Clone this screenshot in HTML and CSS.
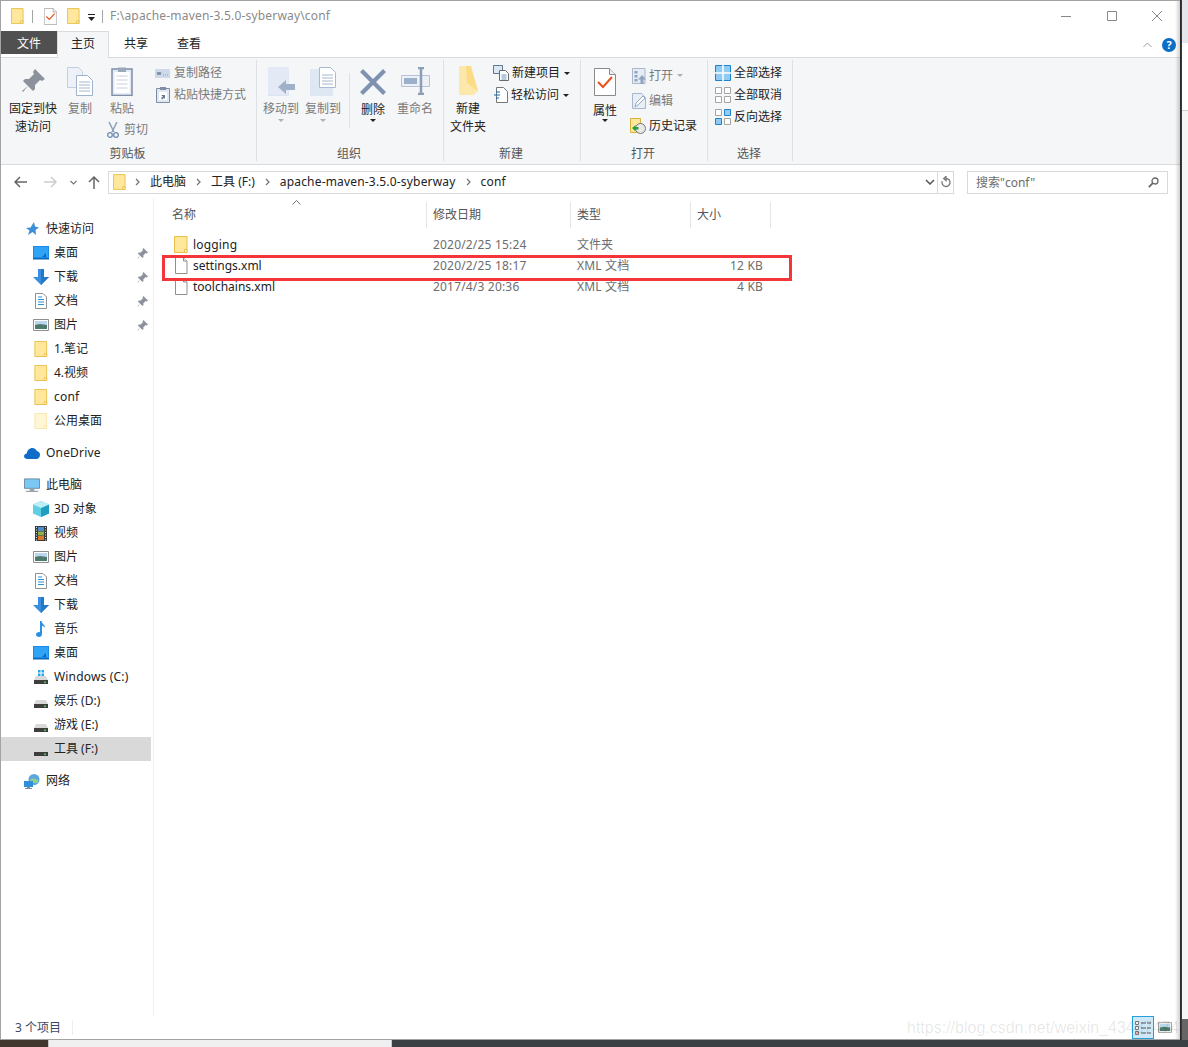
FILE: index.html
```html
<!DOCTYPE html>
<html lang="zh-CN">
<head>
    <meta charset="UTF-8">
    <title>conf</title>
    <link rel="stylesheet" href="styles.css">
</head>
<body>
    <svg class="defs" width="0" height="0">
        <symbol id="folder" viewBox="0 0 14 17">
            <path d="M.5.5h12.5v16H.5z" fill="#ffe89c" stroke="#e8c04a"/>
            <path d="M10.5 13.5H13v3h-2.500z" fill="#fff3c8" stroke="#e8c04a"/>
        </symbol>
        <symbol id="folder-pale" viewBox="0 0 14 17">
            <path d="M.5.5h12.5v16H.5z" fill="#fff6d6" stroke="#f6e6ae"/>
            <path d="M10.5 13.5H13v3h-2.500z" fill="#fffaf0" stroke="#f6e6ae"/>
        </symbol>
        <symbol id="file" viewBox="0 0 14 17">
            <path d="M1.500.5h8l3.500 3.500v12.500h-11.500z" fill="#fff" stroke="#8f8f8f"/>
            <path d="M9.500.5v3.500h3.500" fill="#eee" stroke="#8f8f8f"/>
        </symbol>
        <symbol id="prop" viewBox="0 0 22 28">
            <path d="M.5.5h15l6 6v21H.5z" fill="#fff" stroke="#8a8a8a"/>
            <path d="M15.500.5v6h6" fill="#eee" stroke="#8a8a8a"/>
            <path d="M4 14l5 5 9-10" fill="none" stroke="#e8531e" stroke-width="2"/>
        </symbol>
        <symbol id="pin" viewBox="0 0 12 12">
            <path d="M7 0l5 5-1.500 1-1-.5L7 8v2L6 11 3.500 8.500 1 11.500.5 11l3-2.500L1 6l1-1h2l2.500-2.500-.5-1z" fill="#8b929c"/>
        </symbol>
        <symbol id="desktop" viewBox="0 0 16 14">
            <path d="M0 0h16v12.500H0z" fill="#1a8ae6"/>
            <path d="M1 1h14v10H1z" fill="#2fa3f5"/>
            <path d="M0 12h16v1.500H0zM9 11l4-4v4z" fill="#0b68b8"/>
        </symbol>
        <symbol id="download" viewBox="0 0 16 16">
            <path d="M5 0h6v8h5l-8 8-8-8h5z" fill="#3a8ee0"/>
            <path d="M8 0h3v8h5l-8 8z" fill="#2678c8"/>
        </symbol>
        <symbol id="doc" viewBox="0 0 12 16">
            <path d="M.5.500h7.500l3.500 3.500v11.500H.5z" fill="#fff" stroke="#8f8f8f"/>
            <path d="M3 4h4M3 6.500h6M3 9h6M3 11.500h6" stroke="#2d8fd8" fill="none"/>
        </symbol>
        <symbol id="picture" viewBox="0 0 16 12">
            <path d="M.5.500h15v11H.5z" fill="#fff" stroke="#8f8f8f"/>
            <path d="M2 2h12v4H2z" fill="#b8d6ee"/>
            <path d="M2 6l5-1 7 1v4H2z" fill="#4d7a6c"/>
        </symbol>
        <symbol id="star" viewBox="0 0 14 14">
            <path d="M9 0l1 4.500 4 1-3.500 2.500.5 5-3.500-3L3 13l1.500-4.500L1 6l4.500-.500z" fill="#3d8ed8"/>
        </symbol>
        <symbol id="cloud" viewBox="0 0 16 11">
            <path d="M3.500 11C1.500 11 0 9.800 0 8.200 0 6.700 1.200 5.500 2.800 5.400 3.200 2.400 5.500 0 8.300 0c2 0 3.700 1.100 4.500 3 1.800.2 3.200 1.700 3.200 3.800 0 2.400-1.600 4.200-3.600 4.200z" fill="#0f6cc8"/>
        </symbol>
        <symbol id="pc" viewBox="0 0 17 15">
            <path d="M.5.500h16v10H.5z" fill="#7cc8f4" stroke="#6c8ba0"/>
            <path d="M6 11h5v2H6zM2 13h13v1.500H2z" fill="#9aa4ac"/>
        </symbol>
        <symbol id="cube" viewBox="0 0 16 16">
            <path d="M8 0l8 3.500v9L8 16l-8-3.500v-9z" fill="#5fd0e4"/>
            <path d="M8 7l8-3.500v9L8 16z" fill="#1f9ec0"/>
            <path d="M8 0l8 3.500L8 7 0 3.500z" fill="#bdeef6"/>
        </symbol>
        <symbol id="film" viewBox="0 0 12 15">
            <path d="M0 0h12v15H0z" fill="#3a3a3a"/>
            <path d="M3 1h6v4H3z" fill="#4d8ec8"/>
            <path d="M3 5.500h6v4H3z" fill="#8fb04a"/>
            <path d="M3 10h6v4H3z" fill="#d8782e"/>
            <path d="M1 1.500h1M1 4h1M1 6.500h1M1 9h1M1 11.500h1M1 14h1M10 1.500h1M10 4h1M10 6.500h1M10 9h1M10 11.500h1M10 14h1" stroke="#ddd" fill="none"/>
        </symbol>
        <symbol id="music" viewBox="0 0 10 16">
            <path d="M4 0h1.500c.3 2.500 3.500 3.500 3.500 7-.8-1.500-2-2-3-2.300V13c0 1.700-1.300 3-3 3S0 15 0 13.500 1.500 11 3 11c.4 0 .7 0 1 .2z" fill="#2c8fe6"/>
        </symbol>
        <symbol id="drive" viewBox="0 0 14 8">
            <path d="M2 0h10l2 4H0z" fill="#d9d9d9"/>
            <path d="M0 4h14v4H0z" fill="#3e3e3e"/>
            <path d="M10 5.500h2V7h-2z" fill="#3fd04a"/>
        </symbol>
        <symbol id="winlogo" viewBox="0 0 6 6">
            <path d="M0 0h2.500v2.500H0zM3.500 0H6v2.500H3.500zM0 3.500h2.500V6H0zM3.500 3.500H6V6H3.500z" fill="#22a7e8"/>
        </symbol>
        <symbol id="network" viewBox="0 0 16 15">
            <circle cx="10" cy="5.500" r="5.500" fill="#5aa6de"/>
            <path d="M6 6c2-2 5-2 8 0v3H7z" fill="#8fd08a"/>
            <path d="M0 7h9v6H0z" fill="#2f8fd8"/>
            <path d="M3 13h3v1h2v1H1v-1h2z" fill="#7d8e9c"/>
        </symbol>
        <symbol id="page-copy" viewBox="0 0 26 29">
            <path d="M.5.500h11l4 4v16H.5z" fill="#eef2f8" stroke="#c2cfe2"/>
            <path d="M9.500 8.500h11l5 5v15h-16z" fill="#fff" stroke="#9fb2cd"/>
            <path d="M12 15h11M12 18h11M12 21h11M12 24h11" stroke="#a6b6cc" fill="none"/>
        </symbol>
        <symbol id="clipboard" viewBox="0 0 22 30">
            <path d="M1 3h20v26.500H1z" fill="#e3eaf4" stroke="#7f8ea6" stroke-width="1.500"/>
            <path d="M3.500 6h15v21h-15z" fill="#fff"/>
            <path d="M7 1.500h8V6H7z" fill="#9aa8bc"/>
            <path d="M5.500 10h11M5.500 14h11M5.500 18h11M5.500 22h11" stroke="#c6d0de" fill="none"/>
        </symbol>
        <symbol id="scissors" viewBox="0 0 12 16">
            <path d="M2 0l5 10M10 0L5 10" stroke="#8c9fba" stroke-width="1.500" fill="none"/>
            <circle cx="3" cy="13" r="2.300" fill="none" stroke="#6f8cb2" stroke-width="1.300"/>
            <circle cx="9" cy="13" r="2.300" fill="none" stroke="#6f8cb2" stroke-width="1.300"/>
        </symbol>
        <symbol id="copy-path" viewBox="0 0 15 9">
            <path d="M0 0h15v9H0z" fill="#ced9e9"/>
            <path d="M2 3l1 3 1-3 1 3 1-3M8 6h.7M10 6h.7M12 6h.7" stroke="#66778f" fill="none" stroke-width=".8"/>
        </symbol>
        <symbol id="paste-short" viewBox="0 0 14 16">
            <path d="M.5 1.500h13v14H.5z" fill="#dfe7f1" stroke="#7f8ea6"/>
            <path d="M4 0h6v3H4z" fill="#7f8ea6"/>
            <path d="M3 5h8v8H3z" fill="#fff"/>
            <path d="M5 8h4v4L8 11l-2 1.500L5 11l2-1.500z" fill="#66778f"/>
        </symbol>
        <symbol id="move-to" viewBox="0 0 27 29">
            <path d="M0 0h21v29H0z" fill="#dbe4f1"/>
            <path d="M0 0h21L20 28H0z" fill="#e3eaf5"/>
            <path d="M10 20l8-7v4h9v6h-9v4z" fill="#9fb0c9"/>
        </symbol>
        <symbol id="copy-to" viewBox="0 0 26 29">
            <path d="M0 2h23v27H0z" fill="#dfe7f3"/>
            <path d="M9.500.5h11l5 5v15h-16z" fill="#fff" stroke="#a9bad1"/>
            <path d="M12 8h11M12 11h11M12 14h11M12 17h11" stroke="#a6b6cc" fill="none"/>
        </symbol>
        <symbol id="delete" viewBox="0 0 26 26">
            <path d="M3 0l10 10L23 0l3 3-10 10 10 10-3 3-10-10L3 26l-3-3 10-10L0 3z" fill="#7f92b0"/>
        </symbol>
        <symbol id="rename" viewBox="0 0 29 28">
            <path d="M.5 8.500h28v11H.5z" fill="#edf1f7" stroke="#b7c3d5"/>
            <path d="M3 11h13v6H3z" fill="#9db0ca"/>
            <path d="M17 1h6M20 1v26M17 27h6" stroke="#8c9db6" stroke-width="2.500" fill="none"/>
        </symbol>
        <symbol id="new-folder" viewBox="0 0 20 30">
            <path d="M1 0h12l7 25-5 4H1z" fill="#fbdc85"/>
            <path d="M1 0h7l1 17 11 8-5 4H1z" fill="#fde8ac"/>
        </symbol>
        <symbol id="new-item" viewBox="0 0 16 16">
            <path d="M.5.500h9v8h-9z" fill="#dbe8f5" stroke="#5c7891"/>
            <path d="M6.500 5.500h6l3 3v7h-9z" fill="#fff" stroke="#6d6d6d"/>
            <path d="M8.500 10h5M8.500 12h5M8.500 14h5" stroke="#6c96c0" fill="none"/>
        </symbol>
        <symbol id="easy-access" viewBox="0 0 15 16">
            <path d="M3.500.500h7l4 4v11h-11z" fill="#fff" stroke="#777"/>
            <path d="M3 5h4M1 8h6M3 11h3" stroke="#0e6bb8" stroke-width="1.200" fill="none"/>
        </symbol>
        <symbol id="open-file" viewBox="0 0 14 16">
            <path d="M.5.500h12.500v15H.5z" fill="#e6ecf5" stroke="#a8b7cc"/>
            <path d="M2.500 3h3v2.500h-3zM2.500 7h3v2.500h-3zM2.500 11h3v2.500h-3z" fill="#8fa3bf"/>
            <path d="M10 7l4 4.500h-2.500V16h-3v-4.500H6z" fill="#8fa3bf"/>
        </symbol>
        <symbol id="edit" viewBox="0 0 14 16">
            <path d="M.5.500h9l4 4v11H.5z" fill="#e8eef6" stroke="#a8b7cc"/>
            <path d="M3 14l1-4 7-7 2 2-7 7z" fill="#fff" stroke="#94a8c4"/>
        </symbol>
        <symbol id="history" viewBox="0 0 16 16">
            <path d="M.5.500h10v14H.5z" fill="#ffe89c" stroke="#d8b23c"/>
            <circle cx="10.500" cy="10.500" r="5" fill="#e8e8e8" stroke="#777"/>
            <path d="M2 10l3.500-3v2h3v2.500h-3v2z" fill="#2e9e3a"/>
        </symbol>
        <symbol id="select-all" viewBox="0 0 16 16">
            <path d="M.5.500h15v15H.5z" fill="#8fcbf3" stroke="#1f83cc"/>
            <path d="M8 0v16M0 8h16" stroke="#fff" stroke-width="1.500"/>
        </symbol>
        <symbol id="select-none" viewBox="0 0 16 16">
            <path d="M.5.500h6v6h-6zM9.500.500h6v6h-6zM.5 9.500h6v6h-6zM9.500 9.500h6v6h-6z" fill="#fff" stroke="#a5a5a5"/>
        </symbol>
        <symbol id="select-invert" viewBox="0 0 16 16">
            <path d="M.5.500h6v6h-6zM9.500 9.500h6v6h-6z" fill="#fff" stroke="#a5a5a5"/>
            <path d="M9.500.500h6v6h-6zM.5 9.500h6v6h-6z" fill="#8fcbf3" stroke="#1f83cc"/>
        </symbol>
        <symbol id="chev" viewBox="0 0 5 8">
            <path d="M1 1l3 3-3 3" fill="none" stroke="#777" stroke-width="1.300"/>
        </symbol>
    </svg>

    <div class="window">
        <div class="titlebar">
            <svg class="ico-folder" width="13" height="16"><use href="#folder"/></svg>
            <span class="title-sep"></span>
            <svg class="ico-qat-doc" width="13" height="17"><use href="#prop"/></svg>
            <svg class="ico-qat-folder" width="13" height="16"><use href="#folder"/></svg>
            <svg class="ico-qat-more" width="7" height="7" viewBox="0 0 7 7"><path d="M0 0h7v1H0zM0 3h7L3.500 7z" fill="#222"/></svg>
            <span class="title-sep title-sep-2"></span>
            <span class="title-path wide">F:\apache-maven-3.5.0-syberway\conf</span>
            <div class="winbtns">
                <svg width="10" height="10" viewBox="0 0 10 10"><path d="M0 5.500h10" stroke="#888"/></svg>
                <svg width="10" height="10" viewBox="0 0 10 10"><path d="M.5.500h9v9h-9z" fill="none" stroke="#888"/></svg>
                <svg width="10" height="10" viewBox="0 0 10 10"><path d="M0 0l10 10M10 0L0 10" stroke="#888"/></svg>
            </div>
        </div>

        <div class="tabs">
            <span class="tab tab-file">文件</span>
            <span class="tab tab-home">主页</span>
            <span class="tab tab-share">共享</span>
            <span class="tab tab-view">查看</span>
            <div class="tabs-right">
                <svg width="9" height="6" viewBox="0 0 9 6"><path d="M.5 5l4-4 4 4" fill="none" stroke="#999"/></svg>
                <span class="help">?</span>
            </div>
        </div>

        <div class="ribbon">
            <div class="group group-clip">
                <div class="group-body">
                    <div class="big big-pin">
                        <div class="big-icon"><svg width="24" height="24"><use href="#pin"/></svg></div>
                        <span>固定到快<br>速访问</span>
                    </div>
                    <div class="big big-copy off">
                        <div class="big-icon"><svg width="26" height="29"><use href="#page-copy"/></svg></div>
                        <span>复制</span>
                    </div>
                    <div class="paste-col">
                        <div class="big off">
                            <div class="big-icon"><svg width="22" height="30"><use href="#clipboard"/></svg></div>
                            <span>粘贴</span>
                        </div>
                        <div class="cut-row off">
                            <svg width="12" height="16"><use href="#scissors"/></svg>
                            <span>剪切</span>
                        </div>
                    </div>
                    <div class="small-list off">
                        <div class="small"><svg width="15" height="9"><use href="#copy-path"/></svg><span>复制路径</span></div>
                        <div class="small"><svg class="ico-paste" width="14" height="16"><use href="#paste-short"/></svg><span>粘贴快捷方式</span></div>
                    </div>
                </div>
                <div class="group-label">剪贴板</div>
            </div>

            <div class="group group-org">
                <div class="group-body">
                    <div class="big big-38 off">
                        <div class="big-icon"><svg width="27" height="29"><use href="#move-to"/></svg></div>
                        <span>移动到</span>
                        <i class="caret caret-off"></i>
                    </div>
                    <div class="big big-38 off">
                        <div class="big-icon"><svg width="26" height="29"><use href="#copy-to"/></svg></div>
                        <span>复制到</span>
                        <i class="caret caret-off"></i>
                    </div>
                    <span class="group-sep"></span>
                    <div class="big big-38 big-del">
                        <div class="big-icon"><svg width="26" height="26"><use href="#delete"/></svg></div>
                        <span>删除</span>
                        <i class="caret"></i>
                    </div>
                    <div class="big big-38 off">
                        <div class="big-icon"><svg width="29" height="28"><use href="#rename"/></svg></div>
                        <span>重命名</span>
                    </div>
                </div>
                <div class="group-label">组织</div>
            </div>

            <div class="group group-new">
                <div class="group-body">
                    <div class="big big-newfolder">
                        <div class="big-icon"><svg width="20" height="30"><use href="#new-folder"/></svg></div>
                        <span>新建<br>文件夹</span>
                    </div>
                    <div class="small-list">
                        <div class="small"><svg width="16" height="16"><use href="#new-item"/></svg><span>新建项目</span><i class="caret caret-side"></i></div>
                        <div class="small"><svg width="15" height="16"><use href="#easy-access"/></svg><span>轻松访问</span><i class="caret caret-side"></i></div>
                    </div>
                </div>
                <div class="group-label">新建</div>
            </div>

            <div class="group group-open">
                <div class="group-body">
                    <div class="big big-prop">
                        <div class="big-icon"><svg width="22" height="28"><use href="#prop"/></svg></div>
                        <span>属性</span>
                        <i class="caret"></i>
                    </div>
                    <div class="small-list small-list-open">
                        <div class="small off"><svg width="14" height="16"><use href="#open-file"/></svg><span>打开</span><i class="caret caret-side caret-off"></i></div>
                        <div class="small off"><svg width="14" height="16"><use href="#edit"/></svg><span>编辑</span></div>
                        <div class="small"><svg class="ico-history" width="16" height="16"><use href="#history"/></svg><span>历史记录</span></div>
                    </div>
                </div>
                <div class="group-label">打开</div>
            </div>

            <div class="group group-select">
                <div class="group-body">
                    <div class="small-list">
                        <div class="small"><svg width="16" height="16"><use href="#select-all"/></svg><span>全部选择</span></div>
                        <div class="small"><svg width="16" height="16"><use href="#select-none"/></svg><span>全部取消</span></div>
                        <div class="small"><svg width="16" height="16"><use href="#select-invert"/></svg><span>反向选择</span></div>
                    </div>
                </div>
                <div class="group-label">选择</div>
            </div>
        </div>

        <div class="addressbar">
            <svg class="nav-back" width="13" height="12" viewBox="0 0 13 12"><path d="M6 1L1 6l5 5M1 6h12" fill="none" stroke="#666" stroke-width="1.500"/></svg>
            <svg class="nav-forward" width="13" height="12" viewBox="0 0 13 12"><path d="M7 1l5 5-5 5M12 6H0" fill="none" stroke="#ccc" stroke-width="1.500"/></svg>
            <svg class="nav-recent" width="7" height="5" viewBox="0 0 7 5"><path d="M.5 1l3 3 3-3" fill="none" stroke="#777" stroke-width="1.200"/></svg>
            <svg class="nav-up" width="12" height="13" viewBox="0 0 12 13"><path d="M1 6l5-5 5 5M6 1v12" fill="none" stroke="#666" stroke-width="1.500"/></svg>
            <div class="crumbs">
                <svg class="crumb-folder" width="13" height="16"><use href="#folder"/></svg>
                <svg class="crumb-chev" width="5" height="8"><use href="#chev"/></svg>
                <span>此电脑</span>
                <svg class="crumb-chev" width="5" height="8"><use href="#chev"/></svg>
                <span>工具 (F:)</span>
                <svg class="crumb-chev" width="5" height="8"><use href="#chev"/></svg>
                <span class="wide">apache-maven-3.5.0-syberway</span>
                <svg class="crumb-chev" width="5" height="8"><use href="#chev"/></svg>
                <span class="wide">conf</span>
                <svg class="crumb-down" width="10" height="6" viewBox="0 0 10 6"><path d="M1 1l4 4 4-4" fill="none" stroke="#555" stroke-width="1.500"/></svg>
                <div class="crumb-refresh">
                    <svg width="10" height="12" viewBox="0 0 10 12"><path d="M5 2.500a4 4 0 1 1-3.800 2.800M5 .5v4L2.700 2.500z" fill="none" stroke="#777" stroke-width="1.300"/></svg>
                </div>
            </div>
            <div class="search">
                <span>搜索"conf"</span>
                <svg width="11" height="11" viewBox="0 0 11 11"><circle cx="7" cy="4" r="3" fill="none" stroke="#666" stroke-width="1.300"/><path d="M4.800 6.200L.8 10.200" stroke="#666" stroke-width="1.800"/></svg>
            </div>
        </div>

        <div class="main">
            <div class="tree">
                <div class="tree-group">
                    <div class="node node-top"><svg width="14" height="14"><use href="#star"/></svg><span>快速访问</span></div>
                    <div class="node"><svg width="16" height="14"><use href="#desktop"/></svg><span>桌面</span><svg class="pin" width="11" height="11"><use href="#pin"/></svg></div>
                    <div class="node"><svg width="16" height="16"><use href="#download"/></svg><span>下载</span><svg class="pin" width="11" height="11"><use href="#pin"/></svg></div>
                    <div class="node"><svg width="16" height="16"><use href="#doc"/></svg><span>文档</span><svg class="pin" width="11" height="11"><use href="#pin"/></svg></div>
                    <div class="node"><svg width="16" height="12"><use href="#picture"/></svg><span>图片</span><svg class="pin" width="11" height="11"><use href="#pin"/></svg></div>
                    <div class="node"><svg width="16" height="16"><use href="#folder"/></svg><span>1.笔记</span></div>
                    <div class="node"><svg width="16" height="16"><use href="#folder"/></svg><span>4.视频</span></div>
                    <div class="node"><svg width="16" height="16"><use href="#folder"/></svg><span class="wide">conf</span></div>
                    <div class="node"><svg width="16" height="16"><use href="#folder-pale"/></svg><span>公用桌面</span></div>
                </div>
                <div class="tree-group">
                    <div class="node node-top"><svg width="16" height="11"><use href="#cloud"/></svg><span class="wide">OneDrive</span></div>
                </div>
                <div class="tree-group">
                    <div class="node node-top"><svg width="17" height="15"><use href="#pc"/></svg><span>此电脑</span></div>
                    <div class="node"><svg width="16" height="16"><use href="#cube"/></svg><span>3D 对象</span></div>
                    <div class="node"><svg width="16" height="15"><use href="#film"/></svg><span>视频</span></div>
                    <div class="node"><svg width="16" height="12"><use href="#picture"/></svg><span>图片</span></div>
                    <div class="node"><svg width="16" height="16"><use href="#doc"/></svg><span>文档</span></div>
                    <div class="node"><svg width="16" height="16"><use href="#download"/></svg><span>下载</span></div>
                    <div class="node"><svg width="16" height="16"><use href="#music"/></svg><span>音乐</span></div>
                    <div class="node"><svg width="16" height="14"><use href="#desktop"/></svg><span>桌面</span></div>
                    <div class="node"><svg class="win-badge" width="6" height="6"><use href="#winlogo"/></svg><svg class="drive" width="16" height="8"><use href="#drive"/></svg><span class="wide">Windows (C:)</span></div>
                    <div class="node"><svg class="drive" width="16" height="8"><use href="#drive"/></svg><span>娱乐 (D:)</span></div>
                    <div class="node"><svg class="drive" width="16" height="8"><use href="#drive"/></svg><span>游戏 (E:)</span></div>
                    <div class="node node-active"><svg class="drive" width="16" height="8"><use href="#drive"/></svg><span>工具 (F:)</span></div>
                </div>
                <div class="tree-group">
                    <div class="node node-top"><svg width="16" height="15"><use href="#network"/></svg><span>网络</span></div>
                </div>
            </div>

            <div class="files">
                <svg class="sort-arrow" width="9" height="5" viewBox="0 0 9 5"><path d="M.5 4.500l4-4 4 4" fill="none" stroke="#777"/></svg>
                <div class="file-head">
                    <span class="col-name">名称</span>
                    <span class="col-date">修改日期</span>
                    <span class="col-type">类型</span>
                    <span class="col-size">大小</span>
                </div>
                <div class="file-row">
                    <span class="col-name wide"><svg width="14" height="17"><use href="#folder"/></svg>logging</span>
                    <span class="col-date wide">2020/2/25 15:24</span>
                    <span class="col-type">文件夹</span>
                    <span class="col-size"></span>
                </div>
                <div class="file-row">
                    <span class="col-name"><svg width="14" height="17"><use href="#file"/></svg>settings.xml</span>
                    <span class="col-date wide">2020/2/25 18:17</span>
                    <span class="col-type wide">XML 文档</span>
                    <span class="col-size wide">12 KB</span>
                </div>
                <div class="file-row">
                    <span class="col-name"><svg width="14" height="17"><use href="#file"/></svg>toolchains.xml</span>
                    <span class="col-date wide">2017/4/3 20:36</span>
                    <span class="col-type wide">XML 文档</span>
                    <span class="col-size wide">4 KB</span>
                </div>
                <div class="highlight"></div>
            </div>
        </div>

        <div class="statusbar">
            <span class="status-count">3 个项目</span>
            <span class="status-sep"></span>
            <div class="views">
                <span class="view view-on">
                    <svg width="16" height="14" viewBox="0 0 16 14"><path d="M.5.500h3v3h-3zM.5 5.500h3v3h-3z" fill="#fff" stroke="#777"/><path d="M.5 10.500h3v3h-3z" fill="#f4b0a8" stroke="#777"/><path d="M6 2h10M6 7h10M6 12h10" stroke="#555" stroke-dasharray="5 1" fill="none"/></svg>
                </span>
                <span class="view view-off">
                    <svg width="14" height="11"><use href="#picture"/></svg>
                </span>
            </div>
        </div>
        <div class="watermark">https://blog.csdn.net/weixin_43487474</div>
    </div>

    <div class="desk-right">
        <span class="desk-a"></span>
        <span class="desk-b"></span>
        <span class="desk-c"></span>
        <span class="desk-d"></span>
    </div>
    <div class="taskbar">
        <span class="task-a"></span>
        <span class="task-b"></span>
        <span class="task-c"></span>
    </div>
</body>
</html>
```

FILE: styles.css
```css
* {
    box-sizing: border-box;
}
html, body {
    margin: 0;
    padding: 0;
}
body {
    position: relative;
    width: 1188px;
    height: 1047px;
    overflow: hidden;
    background-color: #2a2a2a;
    font-family: "Noto Sans", "Noto Sans CJK SC", sans-serif;
    font-size: 12px;
    line-height: 18px;
    color: #222;
}
svg {
    flex: none;
    display: block;
}
.defs {
    position: absolute;
}
.wide {
    letter-spacing: 0.18px;
}
.window {
    position: relative;
    width: 1180px;
    height: 1040px;
    display: flex;
    flex-direction: column;
    background-color: #fff;
    border-left: 1px solid #a3a3a3;
    border-top: 1px solid #a3a3a3;
    border-bottom: 1px solid #a3a3a3;
}
.window::after {
    content: "";
    position: absolute;
    top: 0;
    bottom: 0;
    right: 0;
    width: 5px;
    background: linear-gradient(to right, rgba(0, 0, 0, 0), rgba(0, 0, 0, 0.18));
}

/* title bar */
.titlebar {
    height: 30px;
    flex: none;
    display: flex;
    align-items: center;
    padding-left: 10px;
}
.title-sep {
    width: 1px;
    height: 13px;
    background-color: #a5a5a5;
    margin-left: 8px;
}
.ico-qat-doc {
    margin-left: 11px;
}
.ico-qat-folder {
    margin-left: 10px;
}
.ico-qat-more {
    margin-left: 8px;
    margin-top: 2px;
}
.title-sep-2 {
    margin-left: 7px;
}
.title-path {
    margin-left: 7px;
    color: #8a8a8a;
}
.winbtns {
    margin-left: auto;
    display: flex;
    gap: 35.5px;
    padding-right: 18px;
}

/* tabs */
.tabs {
    height: 26px;
    flex: none;
    display: flex;
    align-items: flex-start;
    position: relative;
    z-index: 1;
}
.tab {
    height: 23px;
    line-height: 25px;
    text-align: center;
    color: #222;
}
.tab-file {
    width: 56px;
    background-color: #505050;
    color: #fff;
}
.tab-home {
    width: 52px;
    height: 27px;
    line-height: 24px;
    background-color: #f5f6f7;
    border: 1px solid #dadbdc;
    border-bottom: none;
}
.tab-share {
    width: 24px;
    margin-left: 15px;
}
.tab-view {
    width: 24px;
    margin-left: 29px;
}
.tabs-right {
    margin-left: auto;
    display: flex;
    align-items: center;
    gap: 10px;
    padding: 3px 4px 0 0;
    height: 25px;
}
.help {
    width: 14px;
    height: 14px;
    border-radius: 50%;
    background-color: #0a6cc4;
    color: #fff;
    font-size: 11px;
    font-weight: bold;
    line-height: 14px;
    text-align: center;
}

/* ribbon */
.ribbon {
    height: 108px;
    flex: none;
    display: flex;
    background-color: #f5f6f7;
    border-top: 1px solid #dadbdc;
    border-bottom: 1px solid #dadbdc;
}
.group {
    display: flex;
    flex-direction: column;
    border-right: 1px solid #dfe0e1;
    margin-top: 2px;
    margin-bottom: 3px;
}
.group-clip {
    width: 256px;
}
.group-org {
    width: 187px;
}
.group-new {
    width: 137px;
}
.group-open {
    width: 127px;
}
.group-select {
    width: 85px;
}
.group-body {
    height: 84px;
    display: flex;
    flex: none;
}
.group-label {
    height: 20px;
    line-height: 20px;
    text-align: center;
    padding-right: 2px;
    color: #555;
}
.off {
    color: #7a7a7a;
}
.big {
    display: flex;
    flex-direction: column;
    align-items: center;
    text-align: center;
    white-space: nowrap;
}
.big-icon {
    height: 40px;
    display: flex;
    align-items: center;
    justify-content: center;
    padding-top: 2px;
}
.big-pin {
    width: 54px;
    margin-left: 5px;
}
.big-copy {
    width: 40px;
}
.paste-col {
    width: 44px;
    flex: none;
}
.cut-row {
    width: 48px;
    display: flex;
    align-items: center;
    gap: 5px;
    padding-left: 7px;
    margin-top: 3px;
    white-space: nowrap;
}
.small-list {
    display: flex;
    flex-direction: column;
    padding-top: 2px;
    margin-left: 11px;
}
.small {
    height: 22px;
    display: flex;
    align-items: center;
    gap: 4px;
    white-space: nowrap;
}
.ico-paste {
    margin-left: 1px;
}
.big-38 {
    width: 38px;
    margin-left: 4px;
}
.big-38:first-child {
    margin-left: 5px;
}
.group-sep {
    width: 1px;
    height: 55px;
    background-color: #dfe0e1;
    margin: 13px 0 0 7px;
}
.group-sep + .big-38 {
    margin-left: 4px;
}
.big-del .big-icon {
    height: 41px;
}
.caret {
    width: 0;
    height: 0;
    border-left: 3px solid transparent;
    border-right: 3px solid transparent;
    border-top: 3px solid #222;
    margin-top: 1px;
}
.big-del .caret {
    margin-top: 0;
}
.caret-off {
    border-top-color: #b0b0b0;
}
.caret-side {
    margin: 0;
}
.big-newfolder {
    width: 40px;
    margin-left: 4px;
}
.group-new .small-list {
    margin-left: 5px;
}
.group-new .small,
.group-select .small,
.small-list-open .small {
    gap: 3px;
}
.group-new .small .caret {
    margin-left: 1px;
}
.big-prop {
    width: 40px;
    margin-left: 4px;
}
.big-prop .big-icon {
    height: 42px;
}
.big-prop .caret {
    margin-top: -1px;
}
.small-list-open {
    margin-left: 7px;
    padding-top: 3px;
}
.small-list-open .small {
    height: 25px;
}
.small-list-open .caret {
    margin-left: 1px;
}
.ico-history {
    margin-left: -2px;
}
.group-select .small-list {
    margin-left: 7px;
}

/* address bar */
.addressbar {
    height: 33px;
    flex: none;
    display: flex;
    align-items: center;
    padding-top: 1px;
}
.nav-back {
    margin-left: 13px;
}
.nav-forward {
    margin-left: 17px;
}
.nav-recent {
    margin-left: 13px;
}
.nav-up {
    margin-left: 11px;
}
.crumbs {
    margin-left: 8px;
    width: 846px;
    height: 23px;
    display: flex;
    align-items: center;
    border: 1px solid #d9d9d9;
    white-space: nowrap;
}
.crumb-folder {
    margin: 0 -1px 0 4px;
}
.crumb-chev {
    margin: 0 10px;
}
.crumb-down {
    margin-left: auto;
    margin-right: 2px;
}
.crumb-refresh {
    width: 16px;
    height: 21px;
    display: flex;
    align-items: center;
    justify-content: center;
    border-left: 1px solid #d9d9d9;
}
.search {
    margin-left: 13px;
    width: 201px;
    height: 23px;
    display: flex;
    align-items: center;
    justify-content: space-between;
    padding: 1px 8px 0 8px;
    border: 1px solid #d9d9d9;
    color: #6d6d6d;
}

/* tree and files */
.main {
    flex: 1;
    display: flex;
    min-height: 0;
}
.tree {
    width: 153px;
    flex: none;
    padding-top: 19px;
    border-right: 1px solid #f0f0f0;
}
.tree-group {
    margin-bottom: 8px;
}
.node {
    position: relative;
    width: 150px;
    height: 24px;
    display: flex;
    align-items: center;
    gap: 5px;
    padding-left: 32px;
    white-space: nowrap;
}
.node svg:first-child,
.node .drive {
    width: 16px;
}
.node-top {
    padding-left: 23px;
    gap: 6px;
}
.node-active {
    background-color: #d9d9d9;
}
.drive {
    margin-top: 5px;
}
.pin {
    position: absolute;
    right: 3px;
    top: 7px;
}
.win-badge {
    position: absolute;
    left: 32px;
    top: 5px;
}
.files {
    position: relative;
    flex: 1;
    padding-left: 11px;
}
.sort-arrow {
    position: absolute;
    left: 138px;
    top: 2px;
}
.file-head {
    height: 36px;
    display: flex;
    align-items: flex-start;
    padding-top: 4px;
    color: #555;
}
.file-head span {
    height: 26px;
    line-height: 26px;
    border-right: 1px solid #e5e5e5;
    padding-left: 6px;
}
.file-head .col-name {
    padding-left: 7px;
}
.file-row {
    height: 21px;
    display: flex;
    align-items: center;
    color: #6d6d6d;
}
.file-row span {
    padding-left: 6px;
    white-space: nowrap;
}
.file-row .col-name {
    display: flex;
    align-items: center;
    gap: 5px;
    padding-left: 9px;
    color: #222;
}
.col-name {
    width: 262px;
}
.col-date {
    width: 144px;
}
.col-type {
    width: 120px;
}
.col-size {
    width: 80px;
}
.file-row .col-size {
    text-align: right;
    padding-right: 8px;
}
.highlight {
    position: absolute;
    left: 8px;
    top: 57px;
    width: 630px;
    height: 26px;
    border: 3px solid #f4363a;
}

/* status bar */
.statusbar {
    height: 23px;
    flex: none;
    display: flex;
    align-items: center;
    padding-left: 14px;
    color: #3a4a66;
}
.status-sep {
    width: 1px;
    height: 15px;
    background-color: #eee;
    margin-left: 11px;
}
.views {
    margin-left: auto;
    display: flex;
    align-items: center;
    gap: 4px;
    padding-right: 8px;
}
.view {
    display: flex;
    align-items: center;
    justify-content: center;
}
.view-on {
    width: 22px;
    height: 23px;
    background-color: #cfe8f8;
    border: 1px solid #26a0da;
}
.view-off {
    width: 14px;
}
.watermark {
    position: absolute;
    left: 906px;
    top: 1016px;
    font-family: "Liberation Sans", sans-serif;
    font-size: 16px;
    line-height: 22px;
    color: rgba(0, 0, 0, 0.1);
    white-space: nowrap;
}

/* what shows behind the window */
.desk-right {
    position: absolute;
    left: 1181px;
    top: 0;
    width: 7px;
    height: 1040px;
    display: flex;
    flex-direction: column;
    background-color: #f5f5f5;
    border-left: 1px solid #3a3a3a;
}
.desk-a {
    height: 43px;
    background-color: #e3e6ea;
}
.desk-b {
    height: 68px;
    background-color: #fff;
    border-bottom: 1px solid #cfcfcf;
}
.desk-c {
    flex: 1;
}
.desk-d {
    height: 21px;
    background-color: #666;
}
.taskbar {
    position: absolute;
    left: 0;
    top: 1040px;
    width: 1188px;
    height: 7px;
    display: flex;
}
.task-a {
    width: 48px;
    background-color: #42372e;
}
.task-b {
    width: 344px;
    background-color: #f0f0f0;
    border-left: 1px solid #c8c8c8;
    border-right: 1px solid #c8c8c8;
}
.task-c {
    flex: 1;
    background-color: #3a4044;
}
```
